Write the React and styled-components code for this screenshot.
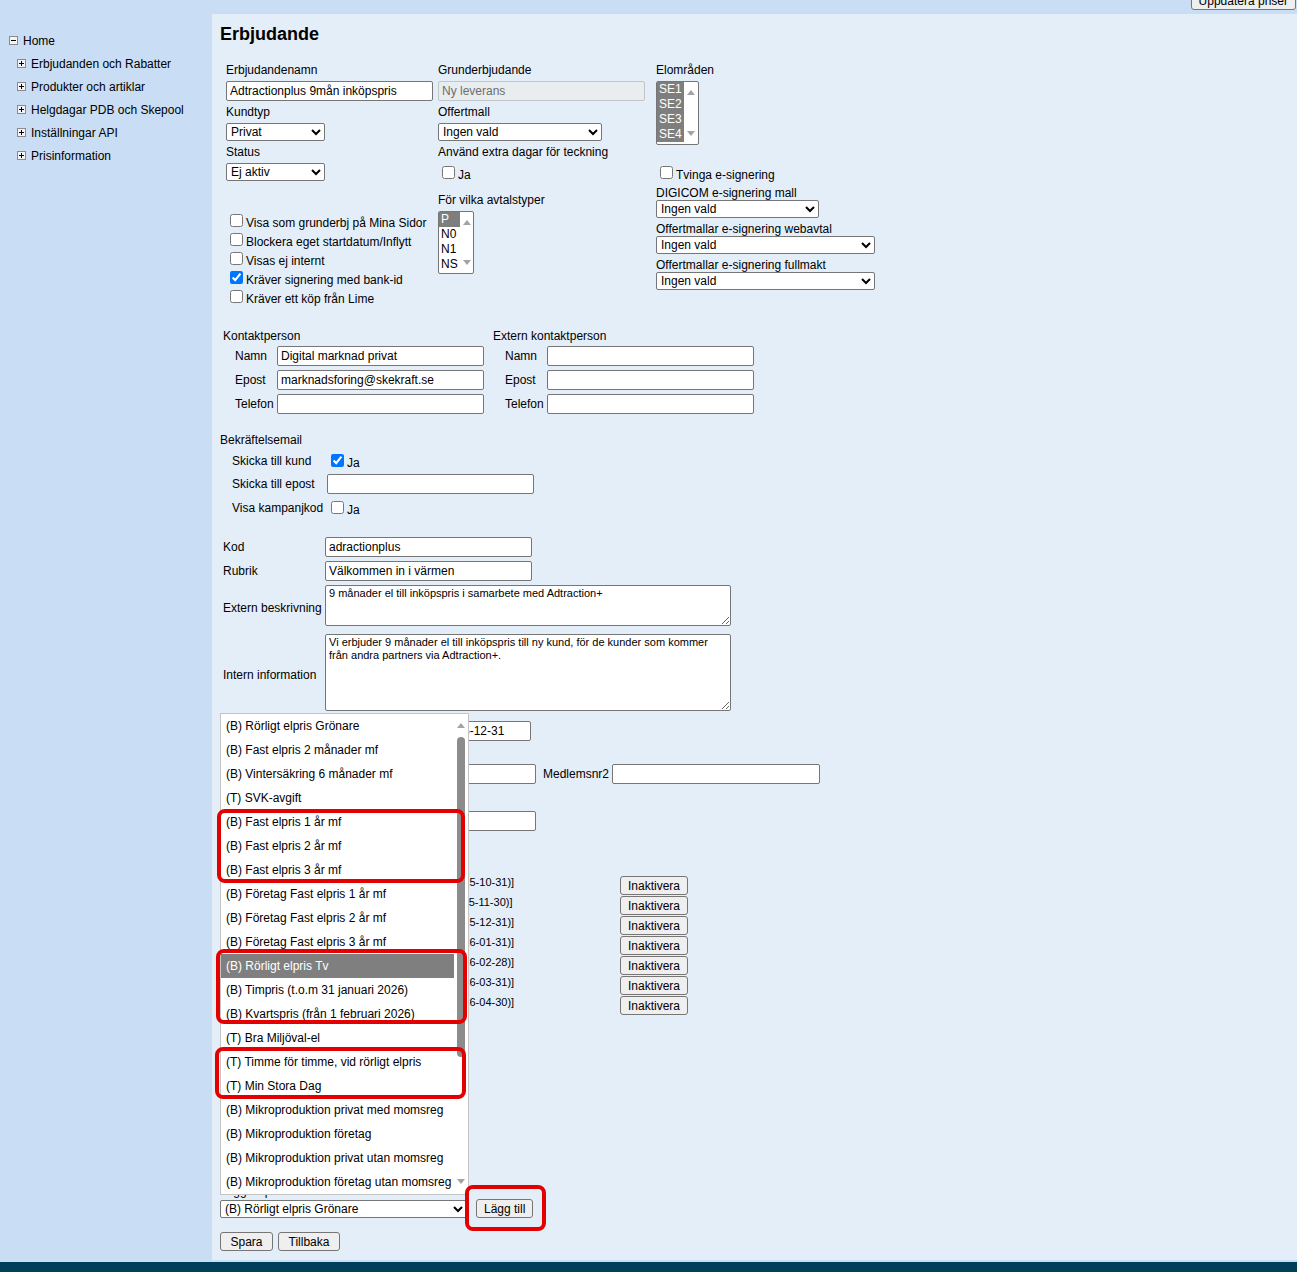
import React from "react";
import styled, { createGlobalStyle } from "styled-components";

const FONT = `"Liberation Sans", Arial, sans-serif`;

const GlobalStyle = createGlobalStyle`
  html, body {
    margin: 0;
    padding: 0;
  }
  body {
    font-family: ${FONT};
    font-size: 12px;
    color: #000;
    background: #c9def4;
  }
`;

const Page = styled.div`
  position: relative;
  width: 100%;
  height: 1272px;
  display: flex;
  flex-direction: column;
  background: #c9def4;
  overflow: hidden;
`;

const Header = styled.header`
  flex: none;
  height: 14px;
  box-sizing: border-box;
  display: flex;
  justify-content: flex-end;
  align-items: flex-end;
  padding: 0 1px 4px 0;
`;

const Body = styled.div`
  flex: none;
  height: 1246px;
  display: flex;
`;

const Footer = styled.footer`
  flex: none;
  height: 10px;
  margin-top: 2px;
  background: #003f5a;
`;

const Sidebar = styled.nav`
  flex: none;
  width: 212px;
  box-sizing: border-box;
  padding-top: 15px;
`;

const TreeRow = styled.div`
  display: flex;
  align-items: center;
  gap: 5px;
  height: 23px;
  padding-left: ${(p) => (p.$child ? 17 : 9)}px;
  white-space: nowrap;
  svg {
    flex: none;
  }
`;

const Main = styled.main`
  flex: 1;
  min-width: 0;
  box-sizing: border-box;
  background: #e4eef8;
  padding: 10px 8px 0;
`;

const Title = styled.h1`
  margin: 0;
  font-size: 18px;
  line-height: 21px;
  font-weight: bold;
`;

const TopGrid = styled.div`
  display: grid;
  grid-template-columns: 212px 218px 1fr;
  align-items: start;
  margin: 17px 0 0 6px;
`;

const Column = styled.div`
  display: flex;
  flex-direction: column;
  align-items: flex-start;
`;

const Label = styled.label`
  display: block;
  line-height: 14px;
  padding-top: 1px;
  white-space: nowrap;
  margin-top: ${(p) => p.$mt || 0}px;
  margin-bottom: ${(p) => (p.$mb === undefined ? 4 : p.$mb)}px;
`;

const TextInput = styled.input`
  box-sizing: border-box;
  flex: none;
  width: ${(p) => p.$w || 207}px;
  height: 20px;
  margin: 0 0 ${(p) => p.$mb || 0}px ${(p) => p.$ml || 0}px;
  padding: 1px 3px;
  border: 1px solid #767676;
  border-radius: 2px;
  background: #fff;
  font: 12px ${FONT};
  color: #000;
  &:disabled {
    background: #eaedf0;
    border-color: #c2c6ca;
    color: #6d6d6d;
  }
`;

const Select = styled.select`
  box-sizing: border-box;
  flex: none;
  width: ${(p) => p.$w}px;
  height: 18px;
  margin: 0 0 ${(p) => p.$mb || 0}px;
  border: 1px solid #767676;
  border-radius: 2px;
  background: #fff;
  font: 12px ${FONT};
  color: #000;
`;

const TextArea = styled.textarea`
  display: block;
  box-sizing: border-box;
  width: 406px;
  height: ${(p) => p.$h}px;
  margin: 0 0 4px;
  padding: 1px 3px;
  border: 1px solid #767676;
  border-radius: 2px;
  background: #fff;
  font: 11px/13px ${FONT};
  color: #000;
`;

const CheckRow = styled.label`
  display: flex;
  align-items: flex-end;
  line-height: 14px;
  white-space: nowrap;
  margin-top: ${(p) => p.$mt || 0}px;
  input {
    width: 13px;
    height: 13px;
    margin: 3px 3px 3px 4px;
  }
`;

const CheckList = styled.div`
  display: flex;
  flex-direction: column;
  margin-top: 30px;
`;

const ListBox = styled.div`
  display: flex;
  box-sizing: border-box;
  width: ${(p) => p.$w}px;
  height: ${(p) => p.$h}px;
  border: 1px solid #767676;
  border-radius: 2px;
  background: #fff;
  overflow: hidden;
`;

const ListOptions = styled.div`
  flex: 1;
  display: flex;
  flex-direction: column;
`;

const ListOption = styled.div`
  height: 15px;
  line-height: 15px;
  padding: 0 2px;
  background: ${(p) => (p.$selected ? "#7e7e7e" : "transparent")};
  color: ${(p) => (p.$selected ? "#fff" : "#000")};
`;

const MiniScroll = styled.div`
  flex: none;
  width: 14px;
  display: flex;
  flex-direction: column;
  justify-content: space-between;
  align-items: center;
  padding: 8px 0;
  box-sizing: border-box;
`;

const ContactSection = styled.div`
  display: flex;
  margin: 23px 0 0 3px;
`;

const ContactBlock = styled.div`
  width: ${(p) => p.$w}px;
`;

const SectionTitle = styled.div`
  line-height: 14px;
  margin-top: ${(p) => p.$mt || 0}px;
`;

const ContactGrid = styled.div`
  display: grid;
  grid-template-columns: 42px 208px;
  row-gap: 4px;
  align-items: center;
  margin-top: 3px;
  padding-left: 12px;
`;

const ConfirmGrid = styled.div`
  display: grid;
  grid-template-columns: 95px auto;
  row-gap: 4px;
  align-items: center;
  justify-items: start;
  margin: 4px 0 0 12px;
`;

const InfoGrid = styled.div`
  display: grid;
  grid-template-columns: 102px auto;
  row-gap: 4px;
  align-items: center;
  justify-items: start;
  margin: 20px 0 0 3px;
`;

const FormRow = styled.div`
  display: flex;
  align-items: center;
  margin: ${(p) => p.$mt}px 0 0 3px;
`;

const RowLabel = styled.span`
  flex: none;
  width: 102px;
  white-space: nowrap;
`;

const InlineLabel = styled.span`
  margin-left: ${(p) => p.$ml || 0}px;
  white-space: nowrap;
`;

const PeriodList = styled.div`
  margin-top: 45px;
`;

const PeriodRow = styled.div`
  display: flex;
  align-items: flex-start;
  height: 20px;
`;

const PeriodCell = styled.span`
  flex: none;
  width: ${(p) => p.$w}px;
  font-size: 11px;
  line-height: 13px;
  white-space: nowrap;
  overflow: hidden;
`;

const Button = styled.button`
  box-sizing: border-box;
  flex: none;
  height: 19px;
  margin: 0;
  padding: 0 ${(p) => p.$px || 7}px;
  font: 12px ${FONT};
  color: #000;
  background: #efefef;
  border: 1px solid #767676;
  border-radius: 3px;
  white-space: nowrap;
`;

const AddLabel = styled.div`
  line-height: 14px;
  margin: 168px 0 1px;
`;

const AddRow = styled.div`
  display: flex;
  align-items: center;
  gap: 9px;
`;

const SelectWrap = styled.div`
  position: relative;
  display: flex;
`;

const Popup = styled.div`
  position: absolute;
  left: 0;
  bottom: calc(100% + 5px);
  z-index: 5;
  display: flex;
  box-sizing: border-box;
  width: 249px;
  height: 482px;
  border: 1px solid #c4c4c4;
  background: #fff;
`;

const PopupList = styled.ul`
  flex: 1;
  list-style: none;
  margin: 0;
  padding: 0;
`;

const PopupItem = styled.li`
  height: 24px;
  line-height: 24px;
  padding-left: 5px;
  white-space: nowrap;
  overflow: hidden;
  background: ${(p) => (p.$selected ? "#7f7f7f" : "transparent")};
  color: ${(p) => (p.$selected ? "#fff" : "#000")};
`;

const PopupScroll = styled.div`
  flex: none;
  width: 14px;
  box-sizing: border-box;
  display: flex;
  flex-direction: column;
  align-items: center;
  padding: 9px 0 10px;
`;

const Thumb = styled.div`
  width: 8px;
  height: 320px;
  margin-top: 9px;
  border-radius: 4px;
  background: #8c8c8c;
`;

const Spacer = styled.div`
  flex: 1;
`;

const ButtonRow = styled.div`
  display: flex;
  gap: 5px;
  margin-top: 14px;
`;

const Annotation = styled.div`
  position: absolute;
  left: ${(p) => p.$x}px;
  top: ${(p) => p.$y}px;
  width: ${(p) => p.$w}px;
  height: ${(p) => p.$h}px;
  box-sizing: border-box;
  border: 4px solid #e20000;
  border-radius: 8px;
  pointer-events: none;
  z-index: 10;
`;

function TreeToggle({ open }) {
  return (
    <svg width="9" height="9" viewBox="0 0 9 9">
      <rect x="0.5" y="0.5" width="8" height="8" fill="#f4f4f4" stroke="#8a8a8a" />
      <path d="M2 4.5h5" stroke="#000" />
      {!open && <path d="M4.5 2v5" stroke="#000" />}
    </svg>
  );
}

function Triangle({ up }) {
  return (
    <svg width="8" height="5" viewBox="0 0 8 5">
      <path d={up ? "M4 0L8 5H0Z" : "M0 0H8L4 5Z"} fill="#a3a3a3" />
    </svg>
  );
}

function MultiList({ w, h, options }) {
  return (
    <ListBox $w={w} $h={h}>
      <ListOptions>
        {options.map((o) => (
          <ListOption key={o.label} $selected={o.selected}>
            {o.label}
          </ListOption>
        ))}
      </ListOptions>
      <MiniScroll>
        <Triangle up />
        <Triangle />
      </MiniScroll>
    </ListBox>
  );
}

const navItems = [
  "Erbjudanden och Rabatter",
  "Produkter och artiklar",
  "Helgdagar PDB och Skepool",
  "Inställningar API",
  "Prisinformation",
];

const products = [
  "(B) Rörligt elpris Grönare",
  "(B) Fast elpris 2 månader mf",
  "(B) Vintersäkring 6 månader mf",
  "(T) SVK-avgift",
  "(B) Fast elpris 1 år mf",
  "(B) Fast elpris 2 år mf",
  "(B) Fast elpris 3 år mf",
  "(B) Företag Fast elpris 1 år mf",
  "(B) Företag Fast elpris 2 år mf",
  "(B) Företag Fast elpris 3 år mf",
  "(B) Rörligt elpris Tv",
  "(B) Timpris (t.o.m 31 januari 2026)",
  "(B) Kvartspris (från 1 februari 2026)",
  "(T) Bra Miljöval-el",
  "(T) Timme för timme, vid rörligt elpris",
  "(T) Min Stora Dag",
  "(B) Mikroproduktion privat med momsreg",
  "(B) Mikroproduktion företag",
  "(B) Mikroproduktion privat utan momsreg",
  "(B) Mikroproduktion företag utan momsreg",
];

const periods = [
  ["2025-10-01", "2025-10-31"],
  ["2025-11-01", "2025-11-30"],
  ["2025-12-01", "2025-12-31"],
  ["2026-01-01", "2026-01-31"],
  ["2026-02-01", "2026-02-28"],
  ["2026-03-01", "2026-03-31"],
  ["2026-04-01", "2026-04-30"],
];

const marks = [
  { x: 217, y: 809, w: 248, h: 74 },
  { x: 216, y: 949, w: 251, h: 75 },
  { x: 215, y: 1047, w: 251, h: 52 },
  { x: 465, y: 1185, w: 81, h: 46 },
];

export default function App() {
  return (
    <Page>
      <GlobalStyle />
      <Header>
        <Button>Uppdatera priser</Button>
      </Header>
      <Body>
        <Sidebar>
          <TreeRow>
            <TreeToggle open />
            Home
          </TreeRow>
          {navItems.map((n) => (
            <TreeRow key={n} $child>
              <TreeToggle />
              {n}
            </TreeRow>
          ))}
        </Sidebar>

        <Main>
          <Title>Erbjudande</Title>

          <TopGrid>
            <Column>
              <Label>Erbjudandenamn</Label>
              <TextInput defaultValue="Adtractionplus 9mån inköpspris" $mb={3} />
              <Label>Kundtyp</Label>
              <Select $w={99} $mb={3} defaultValue="Privat">
                <option>Privat</option>
                <option>Företag</option>
              </Select>
              <Label>Status</Label>
              <Select $w={99} defaultValue="Ej aktiv">
                <option>Aktiv</option>
                <option>Ej aktiv</option>
              </Select>
              <CheckList>
                <CheckRow>
                  <input type="checkbox" />
                  <span>Visa som grunderbj på Mina Sidor</span>
                </CheckRow>
                <CheckRow>
                  <input type="checkbox" />
                  <span>Blockera eget startdatum/Inflytt</span>
                </CheckRow>
                <CheckRow>
                  <input type="checkbox" />
                  <span>Visas ej internt</span>
                </CheckRow>
                <CheckRow>
                  <input type="checkbox" defaultChecked />
                  <span>Kräver signering med bank-id</span>
                </CheckRow>
                <CheckRow>
                  <input type="checkbox" />
                  <span>Kräver ett köp från Lime</span>
                </CheckRow>
              </CheckList>
            </Column>

            <Column>
              <Label>Grunderbjudande</Label>
              <TextInput defaultValue="Ny leverans" disabled $mb={3} />
              <Label>Offertmall</Label>
              <Select $w={164} $mb={3}>
                <option>Ingen vald</option>
              </Select>
              <Label>Använd extra dagar för teckning</Label>
              <CheckRow>
                <input type="checkbox" />
                <span>Ja</span>
              </CheckRow>
              <Label $mt={10}>För vilka avtalstyper</Label>
              <MultiList
                w={36}
                h={63}
                options={[
                  { label: "P", selected: true },
                  { label: "N0" },
                  { label: "N1" },
                  { label: "NS" },
                ]}
              />
            </Column>

            <Column>
              <Label>Elområden</Label>
              <MultiList
                w={43}
                h={64}
                options={["SE1", "SE2", "SE3", "SE4"].map((s) => ({ label: s, selected: true }))}
              />
              <CheckRow $mt={18}>
                <input type="checkbox" />
                <span>Tvinga e-signering</span>
              </CheckRow>
              <Label $mt={3} $mb={0}>DIGICOM e-signering mall</Label>
              <Select $w={163} $mb={3}>
                <option>Ingen vald</option>
              </Select>
              <Label $mb={0}>Offertmallar e-signering webavtal</Label>
              <Select $w={219} $mb={3}>
                <option>Ingen vald</option>
              </Select>
              <Label $mb={0}>Offertmallar e-signering fullmakt</Label>
              <Select $w={219}>
                <option>Ingen vald</option>
              </Select>
            </Column>
          </TopGrid>

          <ContactSection>
            <ContactBlock $w={270}>
              <SectionTitle>Kontaktperson</SectionTitle>
              <ContactGrid>
                <span>Namn</span>
                <TextInput defaultValue="Digital marknad privat" />
                <span>Epost</span>
                <TextInput defaultValue="marknadsforing@skekraft.se" />
                <span>Telefon</span>
                <TextInput />
              </ContactGrid>
            </ContactBlock>
            <ContactBlock $w={270}>
              <SectionTitle>Extern kontaktperson</SectionTitle>
              <ContactGrid>
                <span>Namn</span>
                <TextInput />
                <span>Epost</span>
                <TextInput />
                <span>Telefon</span>
                <TextInput />
              </ContactGrid>
            </ContactBlock>
          </ContactSection>

          <SectionTitle $mt={19}>Bekräftelsemail</SectionTitle>
          <ConfirmGrid>
            <span>Skicka till kund</span>
            <CheckRow>
              <input type="checkbox" defaultChecked />
              <span>Ja</span>
            </CheckRow>
            <span>Skicka till epost</span>
            <TextInput />
            <span>Visa kampanjkod</span>
            <CheckRow>
              <input type="checkbox" />
              <span>Ja</span>
            </CheckRow>
          </ConfirmGrid>

          <InfoGrid>
            <span>Kod</span>
            <TextInput defaultValue="adractionplus" />
            <span>Rubrik</span>
            <TextInput defaultValue="Välkommen in i värmen" />
            <span>Extern beskrivning</span>
            <TextArea $h={41} defaultValue="9 månader el till inköpspris i samarbete med Adtraction+" />
            <span>Intern information</span>
            <TextArea
              $h={77}
              defaultValue="Vi erbjuder 9 månader el till inköpspris till ny kund, för de kunder som kommer från andra partners via Adtraction+."
            />
          </InfoGrid>

          <FormRow $mt={6}>
            <RowLabel>Giltighetstid</RowLabel>
            <TextInput $w={106} defaultValue="2025-01-01" />
            <TextInput $w={92} $ml={8} defaultValue="2025-12-31" />
          </FormRow>
          <FormRow $mt={23}>
            <RowLabel>Medlemsnr</RowLabel>
            <TextInput $w={211} />
            <InlineLabel $ml={7}>Medlemsnr2</InlineLabel>
            <TextInput $w={208} $ml={3} />
          </FormRow>
          <FormRow $mt={27}>
            <RowLabel>Kampanjkod</RowLabel>
            <TextInput $w={211} />
          </FormRow>

          <PeriodList>
            {periods.map(([from, to]) => (
              <PeriodRow key={from}>
                <PeriodCell $w={162}>(B) Rörligt elpris Grönare</PeriodCell>
                <PeriodCell $w={238}>
                  [{from} - {to})]
                </PeriodCell>
                <Button>Inaktivera</Button>
              </PeriodRow>
            ))}
          </PeriodList>

          <AddLabel>Lägg till produkt</AddLabel>
          <AddRow>
            <SelectWrap>
              <Select $w={247} defaultValue={products[0]}>
                {products.map((p) => (
                  <option key={p}>{p}</option>
                ))}
              </Select>
              <Popup>
                <PopupList>
                  {products.map((p, i) => (
                    <PopupItem key={p} $selected={i === 10}>
                      {p}
                    </PopupItem>
                  ))}
                </PopupList>
                <PopupScroll>
                  <Triangle up />
                  <Thumb />
                  <Spacer />
                  <Triangle />
                </PopupScroll>
              </Popup>
            </SelectWrap>
            <Button>Lägg till</Button>
          </AddRow>

          <ButtonRow>
            <Button $px={9.5}>Spara</Button>
            <Button $px={9.5}>Tillbaka</Button>
          </ButtonRow>
        </Main>
      </Body>
      <Footer />
      {marks.map((m, i) => (
        <Annotation key={i} $x={m.x} $y={m.y} $w={m.w} $h={m.h} />
      ))}
    </Page>
  );
}
